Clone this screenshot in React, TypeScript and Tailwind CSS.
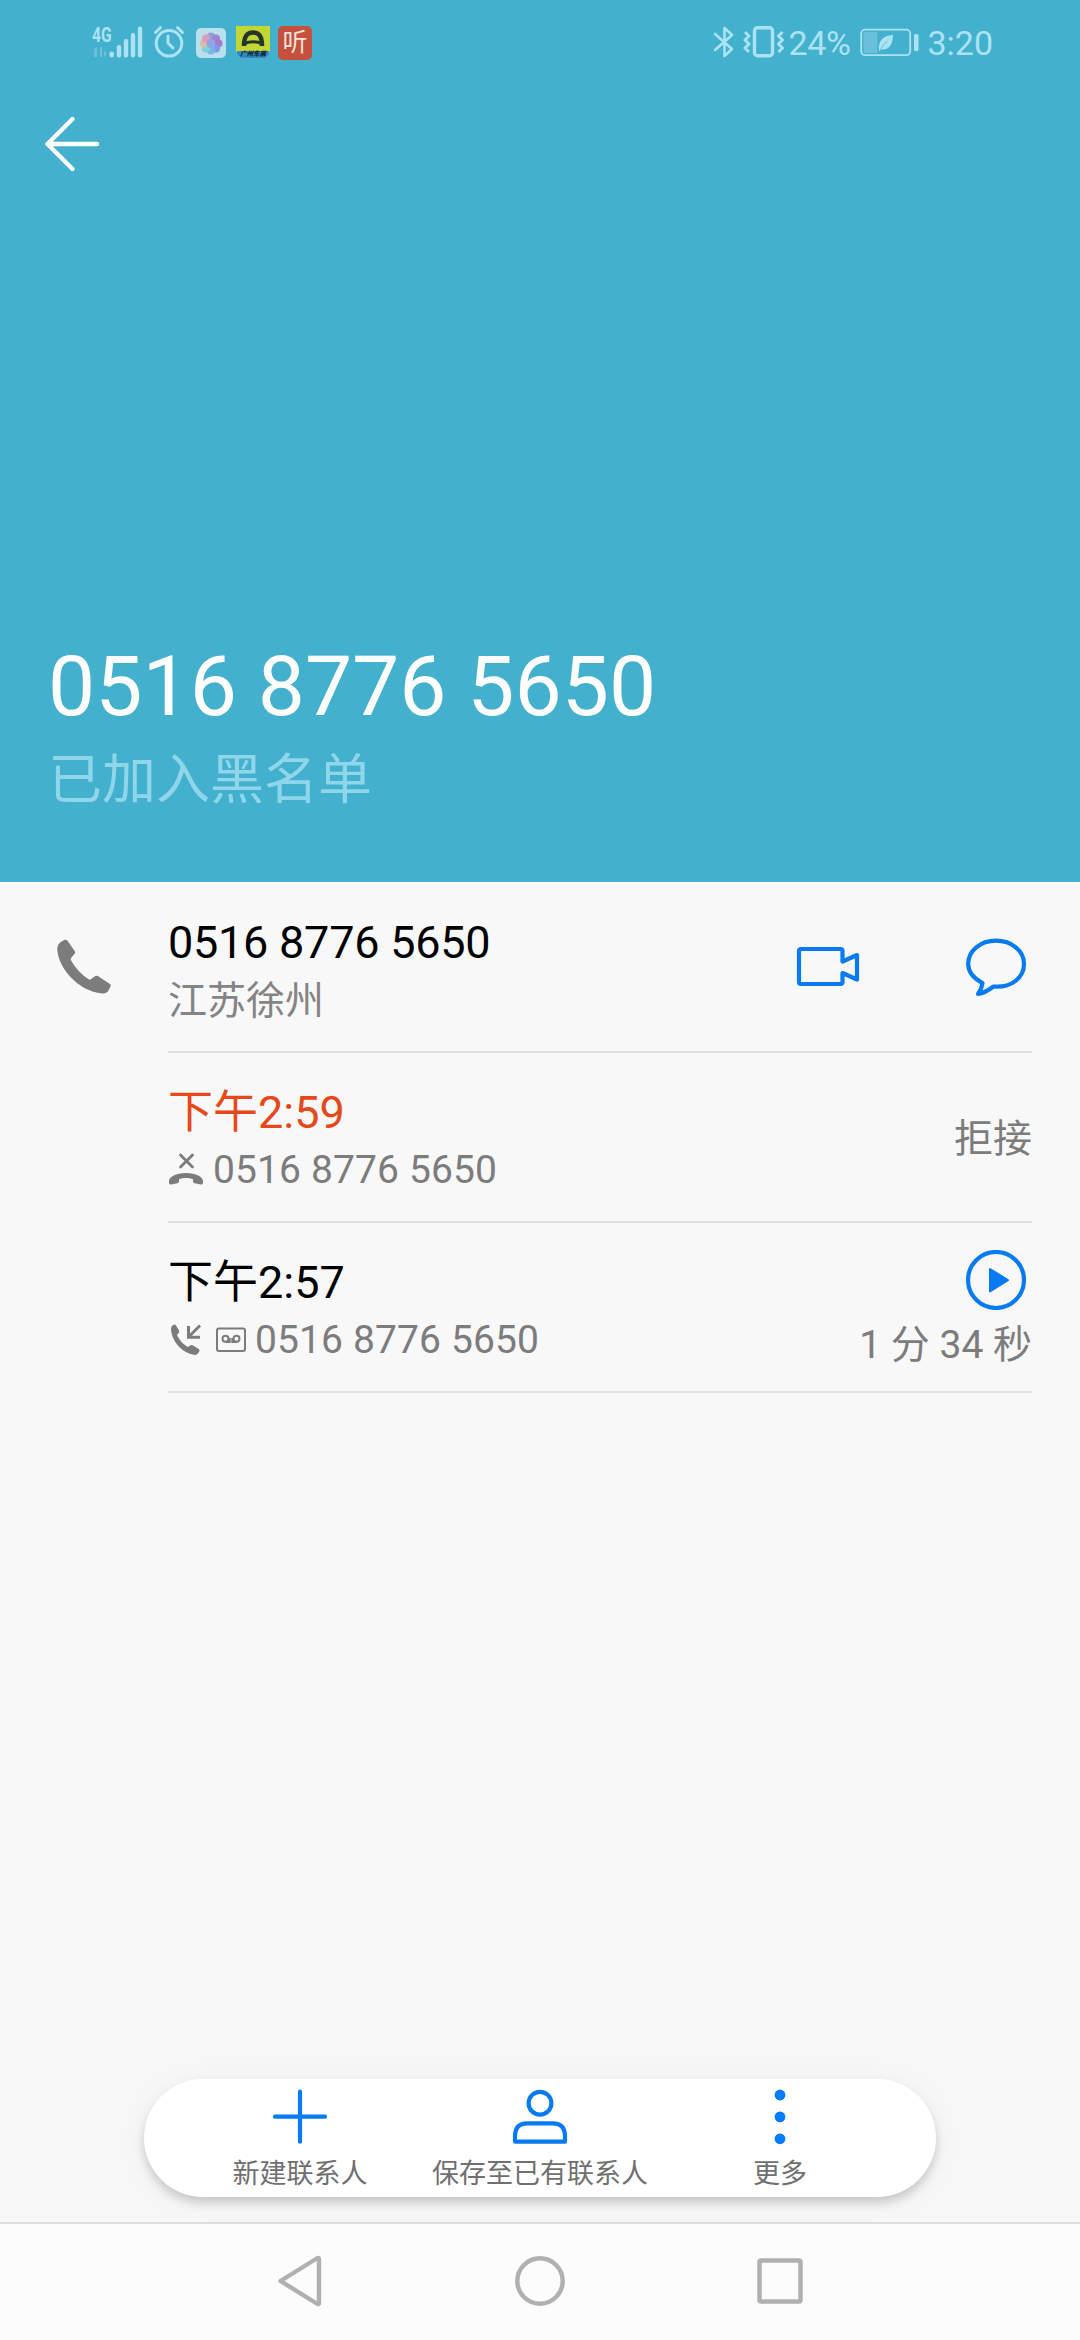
import type { ReactNode } from "react";

const PHONE = "0516 8776 5650";

function StatusBar() {
  return (
    <div className="flex h-[84px] items-start justify-between pl-[92px] pr-[87px] pt-[24px] text-[#abe3f4]">
      <div className="flex">
        {/* Signal */}
        <div className="relative h-[36px] w-[52px]">
          <span className="absolute left-0 top-[2px] origin-left scale-x-[0.78] text-[20px] leading-[18px] font-bold">4G</span>
          <svg className="h-[36px] w-[52px]" viewBox="0 0 52 36" fill="currentColor">
            <g opacity="0.35">
              <path d="M1 26l4-3v10H2v-7zM8 23h2v10H8zM12 26l3 4-3 3z" />
            </g>
            <rect x="17.5" y="27.5" width="4.4" height="6" rx="2" />
            <rect x="24.8" y="21" width="4.4" height="12.5" rx="2" />
            <rect x="31.8" y="15" width="4.4" height="18.5" rx="2" />
            <rect x="38.8" y="9" width="4.4" height="24.5" rx="2" />
            <rect x="45.8" y="2.5" width="4.4" height="31" rx="2" />
          </svg>
        </div>
        {/* Alarm */}
        <svg className="ml-[9px] h-[36px] w-[32px]" viewBox="0 0 32 36" fill="none" stroke="currentColor" strokeWidth="3" strokeLinecap="round">
          <circle cx="16" cy="19.3" r="12.8" />
          <path d="M15 12v7l5 5M2.5 8.5l5-5M29.5 8.5l-5-5" />
        </svg>
        {/* Gallery */}
        <svg className="ml-[11px] h-[36px] w-[30px]" viewBox="0 0 30 36">
          <rect y="4" width="30" height="30" rx="5" fill="#b9e0ec" />
          <g opacity="0.85">
            <circle cx="15" cy="12.5" r="4" fill="#8b96d8" />
            <circle cx="20" cy="14.5" r="4" fill="#9a72cf" />
            <circle cx="22.5" cy="19.500" r="4" fill="#a568d2" />
            <circle cx="20" cy="24.500" r="4" fill="#7c8ae6" />
            <circle cx="15" cy="26.500" r="4" fill="#6db0e8" />
            <circle cx="10" cy="24.500" r="4" fill="#77cde0" />
            <circle cx="8" cy="19.5" r="4" fill="#e0b79a" />
            <circle cx="10" cy="14.5" r="4" fill="#e591b5" />
            <circle cx="15" cy="19.500" r="4.5" fill="#8a9be4" />
          </g>
        </svg>
        {/* Auto show app */}
        <div className="relative ml-[10px] h-[36px] w-[34px]">
          <svg className="h-[36px] w-[34px]" viewBox="0 0 34 36">
            <rect y="2" width="34" height="26" fill="#c3d631" />
            <path d="M1 27h32v3l-4 4H5l-4-4z" fill="#3289c9" />
            <path d="M8 22C8 11 12 8.500 17 8.500s9 2.500 9 13.500" fill="none" stroke="#26352a" strokeWidth="4.600" />
            <path d="M8 19.500q9-3.500 18 0" fill="none" stroke="#26352a" strokeWidth="3" />
          </svg>
          <span className="absolute left-[4px] top-[26px] text-[6.5px] leading-[8px] font-black whitespace-nowrap italic text-[#122733]">广州车展</span>
        </div>
        <div className="ml-[8px] mt-[2px] flex h-[34px] w-[34px] items-center justify-center rounded-[5px] bg-[#c4503d]">
          <span className="text-[25px] leading-[30px] text-[#f6e3dc]">听</span>
        </div>
      </div>

      <div className="flex">
        <svg className="h-[36px] w-[22px]" viewBox="0 0 22 36" fill="none" stroke="currentColor" strokeWidth="2.6" strokeLinejoin="round" strokeLinecap="round">
          <path d="M2 10l17 15-7.500 7V4L19 11 2 26" />
        </svg>
        <svg className="ml-[8px] h-[36px] w-[42px]" viewBox="0 0 42 36" fill="none" stroke="currentColor" strokeWidth="3" strokeLinejoin="round">
          <rect x="11.500" y="3.800" width="18" height="28" rx="3" strokeWidth="3.4" />
          <path d="M2 8l4 4-4 4 4 4-4 4 4 4M39.500 8l-4 4 4 4-4 4 4 4-4 4" strokeWidth="3" />
        </svg>
        <span className="ml-[3px] w-[65px] text-[34px] leading-[38px] tracking-[-0.3px]">24%</span>
        <svg className="ml-[7px] h-[36px] w-[60px]" viewBox="0 0 60 36">
          <rect x="1.200" y="5.700" width="49" height="25.500" rx="4" fill="none" stroke="currentColor" strokeWidth="1.800" />
          <rect x="3.500" y="8" width="14" height="21" fill="currentColor" opacity="0.35" />
          <path d="M19 26c-1-9 4-14.500 14-15 0 9-4 15.500-12 14.500l-1.500 1.500z" fill="currentColor" />
          <path d="M20.500 25.500q3-5.500 7-8.500" stroke="#43b0cd" strokeWidth="0.700" fill="none" />
          <rect x="54" y="10" width="4.500" height="17" rx="1.500" fill="currentColor" />
        </svg>
        <span className="ml-[7px] text-[34px] leading-[38px]">3:20</span>
      </div>
    </div>
  );
}

function VideoIcon() {
  return (
    <svg className="h-[60px] w-[64px]" viewBox="0 0 64 60" fill="none" stroke="#087bf3" strokeWidth="4.200" strokeLinejoin="round" strokeLinecap="round">
      <path d="M46.500 24.500V14q0-2-2-2H5q-2 0-2 2v31q0 2 2 2h39.500q2 0 2-2V36l14.500 6.500V18z" />
    </svg>
  );
}

function ChatIcon() {
  return (
    <svg className="h-[60px] w-[62px]" viewBox="0 0 62 60" fill="none" stroke="#087bf3" strokeWidth="4.200" strokeLinejoin="round">
      <path d="M17.500 46C8 41 3.200 34.500 3.200 27 3.200 13.500 15.500 3.700 31 3.700S59 13.500 59 27C59 41 46 51 28.500 49.500 24 53 19 56 13 57 15.500 53.500 17 50.500 17.500 46z" />
    </svg>
  );
}

function RejectedIcon() {
  return (
    <svg className="h-[36px] w-[36px]" viewBox="0 0 36 36" fill="#7c7c7c">
      <path d="M12.500 3l12 12M24.500 3l-12 12" stroke="#7c7c7c" strokeWidth="2.800" strokeLinecap="round" />
      <path d="M1 29c0-4 7-8 17-8s17 4 17 8v2c0 1-1 1.700-2.300 1.500l-6-1.200c-1.200-.3-1.700-1-1.700-2v-2c-4-1.700-10-1.700-14 0v2c0 1-.5 1.700-1.700 2l-6 1.200C2 32.700 1 32 1 31z" />
    </svg>
  );
}

const HANDSET =
  "M3 3.500L7 1q2-1 3.300.8l7 10q1 1.600-.2 3L14 18.500q-1 1.200-.2 2.700C18 29 24 35 31 39.500q1.500.8 2.600-.2l3.500-2.800q1.500-1 3-.1l11.500 7.500q1.800 1.200.8 3L50 51.500q-2 2.300-5.500 2C20 51 1 28 .2 9.500Q.3 5.500 3 3.500z";

function IncomingIcon() {
  return (
    <svg className="h-[36px] w-[36px]" viewBox="0 0 36 36" fill="#7c7c7c">
      <path d="M5 3q2-1.200 3 .5l3 5q.8 1.600-.5 2.700l-1.500 1.500C11 18 15.500 22.500 20 25l2-1.500q1.500-1 3 0l5.700 3.500q1.500 1 .5 2.600l-1.500 2.200q-1 1.400-3.500 1C14 31 3.500 19 3 7Q3 4.200 5 3z" />
      <path d="M32 3.500L21 14.500M20.500 4v11.300H32" fill="none" stroke="#7c7c7c" strokeWidth="3" />
    </svg>
  );
}

function RecordingIcon() {
  return (
    <svg className="h-[36px] w-[32px]" viewBox="0 0 32 36" fill="none" stroke="#7c7c7c" strokeWidth="2">
      <rect x="2" y="6.500" width="28" height="22.500" rx="2" />
      <circle cx="10.500" cy="16.800" r="3" />
      <circle cx="21.500" cy="16.800" r="3" />
      <path d="M10.500 20h4.200v-4M21.500 20h-4.200v-4" />
    </svg>
  );
}

function PlayIcon() {
  return (
    <svg className="h-[60px] w-[60px]" viewBox="0 0 60 60">
      <circle cx="30" cy="30" r="28" fill="none" stroke="#087bf3" strokeWidth="4.200" />
      <path d="M24 19v22.500L42 30.200z" fill="#087bf3" stroke="#087bf3" strokeWidth="2" strokeLinejoin="round" />
    </svg>
  );
}

type CallRowProps = {
  time: string;
  rejected?: boolean;
  icons: ReactNode;
  children: ReactNode;
};

function CallRow({ time, rejected, icons, children }: CallRowProps) {
  return (
    <div className="ml-[168px] mr-[48px] flex h-[170px] justify-between border-b-2 border-[#e0e0e0]">
      <div className="pt-[33px]">
        <div className={rejected ? "text-[45px] leading-[54px] text-[#e64819]" : "text-[45px] leading-[54px] text-black"}>{time}</div>
        <div className="mt-[6px] flex h-[48px] text-[39px] leading-[48px] text-[#7c7c7c]">
          {icons}
          <span className="tracking-[0.12px]">{PHONE}</span>
        </div>
      </div>
      <div className="flex flex-col items-end text-[39px] leading-[48px] text-[#7c7c7c]">{children}</div>
    </div>
  );
}

const actions = [
  {
    label: "新建联系人",
    icon: <path d="M30 4.700v50M5 29.700h50" strokeLinecap="round" />,
  },
  {
    label: "保存至已有联系人",
    icon: (
      <>
        <circle cx="30" cy="16.200" r="11.400" />
        <path d="M5 54.500v-5Q5 36.300 17 36.300h26q12 0 12 13.200v5q0 .2-1 .2H6q-1 0-1-.2z" strokeLinejoin="round" />
      </>
    ),
  },
  {
    label: "更多",
    icon: (
      <g fill="#007dff" stroke="none">
        <circle cx="30" cy="8" r="5.400" />
        <circle cx="30" cy="29.900" r="5.400" />
        <circle cx="30" cy="51.800" r="5.400" />
      </g>
    ),
  },
];

export default function App() {
  return (
    <div className="flex h-[2340px] w-[1080px] flex-col overflow-hidden bg-[#f8f8f8] font-[Roboto,'Noto_Sans_CJK_SC',sans-serif]">
      {/* Header */}
      <header className="flex h-[882px] flex-col bg-[#43b0cd]">
        <StatusBar />
        <svg className="ml-[42px] mt-[30px] h-[60px] w-[60px]" viewBox="0 0 60 60" fill="none" stroke="#fff" strokeWidth="4.400" strokeLinecap="round" strokeLinejoin="round">
          <path d="M30.500 5L5.500 30l25 25M5.500 30H55" />
        </svg>
        <div className="mt-auto pb-[71px] pl-[48px]">
          <h1 className="text-[84px] leading-[100px] text-white">{PHONE}</h1>
          <p className="mt-[14px] text-[54px] leading-[60px] text-[#8fd6eb]">已加入黑名单</p>
        </div>
      </header>

      {/* Number */}
      <div className="flex h-[171px]">
        <svg className="ml-[57px] mt-[57px] h-[55px] w-[54px]" viewBox="0 0 53 54" fill="#7c7c7c">
          <path d={HANDSET} />
        </svg>
        <div className="ml-[57px] mr-[48px] flex flex-1 border-b-2 border-[#e0e0e0]">
          <div className="flex-1 pt-[34px]">
            <div className="text-[45px] leading-[54px] tracking-[-0.25px] text-black">{PHONE}</div>
            <div className="mt-[7px] text-[39px] leading-[48px] text-[#848484]">江苏徐州</div>
          </div>
          <div className="flex gap-[105px] pr-[5px] pt-[55px]">
            <VideoIcon />
            <ChatIcon />
          </div>
        </div>
      </div>

      {/* Call log */}
      <CallRow
        time="下午2:59"
        rejected
        icons={<div className="mr-[9px] mt-[6px]"><RejectedIcon /></div>}
      >
        <span className="mt-[62px]">拒接</span>
      </CallRow>
      <CallRow
        time="下午2:57"
        icons={
          <div className="mr-[8px] mt-[6px] flex gap-[11px]">
            <IncomingIcon />
            <RecordingIcon />
          </div>
        }
      >
        <div className="mr-[6px] mt-[27px]"><PlayIcon /></div>
        <span className="mt-[11px]">1 分 34 秒</span>
      </CallRow>

      {/* Actions */}
      <div className="mx-auto mb-[25px] mt-auto grid h-[118px] w-[792px] grid-cols-3 rounded-full bg-white px-[36px] shadow-[0_6px_10px_rgba(0,0,0,0.17),0_4px_40px_rgba(0,0,0,0.05)]">
        {actions.map((action) => (
          <div key={action.label} className="flex flex-col items-center pt-[8px]">
            <svg className="h-[60px] w-[60px] shrink-0" viewBox="0 0 60 60" fill="none" stroke="#087bf3" strokeWidth="4.200">
              {action.icon}
            </svg>
            <span className="mt-[9px] text-[27px] leading-[36px] whitespace-nowrap text-[#707070]">{action.label}</span>
          </div>
        ))}
      </div>

      {/* System navigation */}
      <nav className="relative flex h-[118px] justify-center border-t-2 border-[#dedede] bg-[#fcfcfc] pt-[27px]">
        <svg className="h-[60px] w-[720px]" viewBox="0 0 720 60" fill="none" stroke="#b0b0b0" strokeWidth="4.400" strokeLinejoin="round">
          <path d="M100.500 30L137.500 7q1.500-.5 1.500 1v44q0 1.500-1.500 1z" />
          <circle cx="360" cy="30" r="22.700" />
          <rect x="579.500" y="9.500" width="41" height="41" rx="1.500" />
        </svg>
      </nav>
    </div>
  );
}
